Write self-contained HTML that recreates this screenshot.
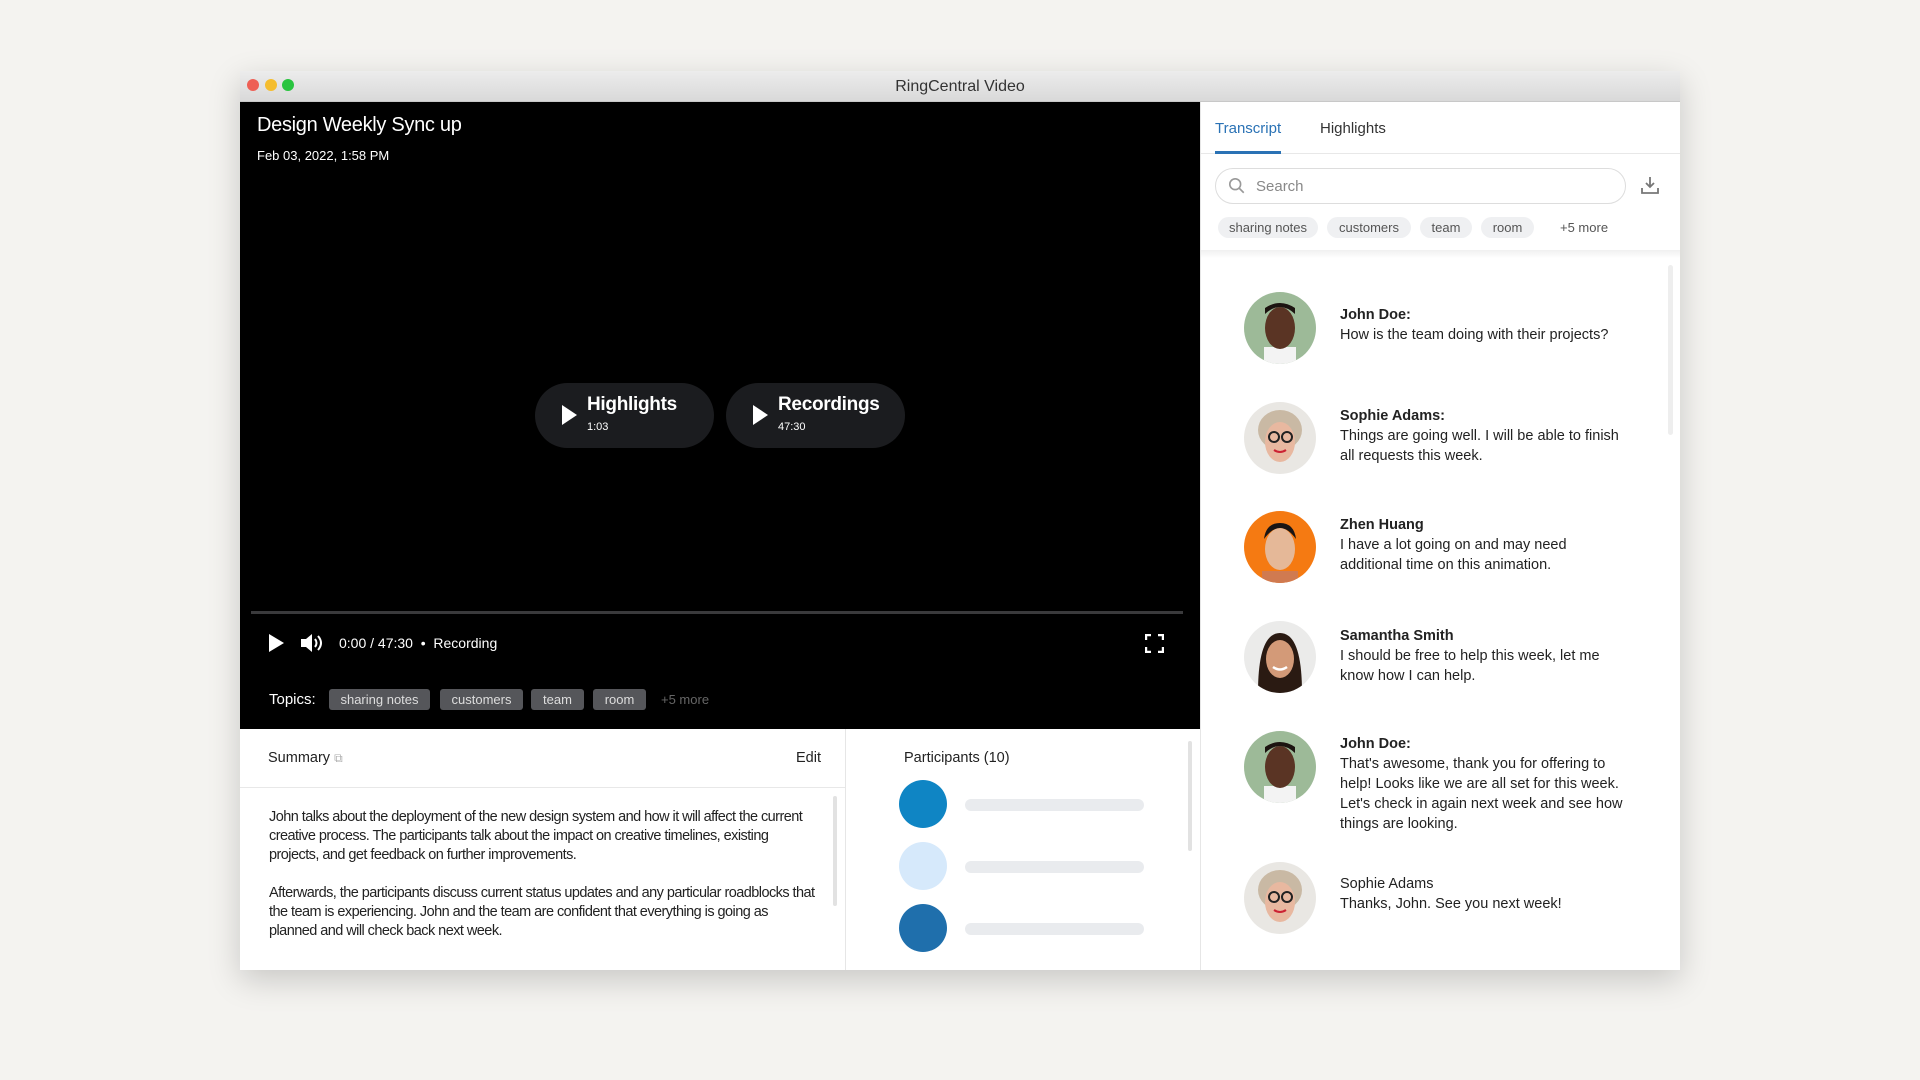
<!DOCTYPE html>
<html><head><meta charset="utf-8"><style>
*{margin:0;padding:0;box-sizing:border-box}
body{width:1920px;height:1080px;background:#f4f3f0;font-family:"Liberation Sans",sans-serif;position:relative;overflow:hidden}
.a{position:absolute}
.win{left:240px;top:71px;width:1440px;height:899px;background:#fff;box-shadow:0 10px 30px rgba(0,0,0,.18)}
.tb{left:240px;top:71px;width:1440px;height:31px;background:linear-gradient(#ececec,#d9d9d9);border-bottom:1px solid #c8c8c8;text-align:center;font-size:16px;line-height:31px;color:#333}
.dot{width:12px;height:12px;border-radius:50%;top:79px}
.vid{left:240px;top:102px;width:960px;height:627px;background:#000}
.pill{top:383px;height:65px;width:179px;border-radius:33px;background:#1b1c1f;color:#fff}
.pill b{position:absolute;left:52px;top:11px;font-size:19px;letter-spacing:-.3px}
.pill span{position:absolute;left:52px;top:38px;font-size:11px}
.tri{position:absolute;left:27px;top:22px;width:0;height:0;border-left:15px solid #fff;border-top:10px solid transparent;border-bottom:10px solid transparent}
.vc{background:#55565a;color:#ddd;font-size:13px;height:21px;line-height:21px;border-radius:3px;text-align:center;top:689px}
.rc{background:#eff0f2;color:#555;font-size:13px;height:21px;line-height:21px;border-radius:11px;text-align:center;top:217px}
.tx{font-size:14.5px;line-height:20px;color:#222;left:1340px;width:286px}
.tx b{display:block}
.sm{font-size:14.5px;line-height:19px;color:#222;left:269px;width:548px;letter-spacing:-.55px}
.bar{left:965px;width:179px;height:12px;border-radius:6px;background:#e9ebee}
.pc{left:899px;width:48px;height:48px;border-radius:50%}
</style></head><body>
<div class="a win"></div>
<div class="a tb">RingCentral Video</div>
<div class="a dot" style="left:247px;background:#ee5f55"></div>
<div class="a dot" style="left:265px;background:#f5bd2e"></div>
<div class="a dot" style="left:282px;background:#29c43f"></div>
<div class="a vid"></div>
<div class="a" style="left:257px;top:114px;color:#fff;font-size:20px;letter-spacing:-.3px">Design Weekly Sync up</div>
<div class="a" style="left:257px;top:148px;color:#fff;font-size:13px">Feb 03, 2022, 1:58 PM</div>
<div class="a pill" style="left:535px"><i class="tri"></i><b>Highlights</b><span>1:03</span></div>
<div class="a pill" style="left:726px"><i class="tri"></i><b>Recordings</b><span>47:30</span></div>
<div class="a" style="left:251px;top:611px;width:932px;height:3px;background:#3a3a3c"></div>
<div class="a" style="left:269px;top:634px;width:0;height:0;border-left:15px solid #fff;border-top:9px solid transparent;border-bottom:9px solid transparent"></div>
<svg class="a" style="left:300px;top:632px" width="24" height="22" viewBox="0 0 24 22"><path d="M1 7h5l6-5v18l-6-5H1z" fill="#fff"/><path d="M15 7q3 4 0 8M18 4q6 7 0 14" stroke="#fff" stroke-width="2" fill="none"/></svg>
<div class="a" style="left:339px;top:635px;color:#fff;font-size:14px">0:00 / 47:30 &nbsp;•&nbsp; Recording</div>
<svg class="a" style="left:1145px;top:634px" width="19" height="19" viewBox="0 0 19 19" fill="none" stroke="#fff" stroke-width="2.4"><path d="M1 6V1h5M13 1h5v5M18 13v5h-5M6 18H1v-5"/></svg>
<div class="a" style="left:269px;top:691px;color:#fff;font-size:15px">Topics:</div>
<div class="a vc" style="left:329px;width:101px">sharing notes</div>
<div class="a vc" style="left:440px;width:83px">customers</div>
<div class="a vc" style="left:531px;width:53px">team</div>
<div class="a vc" style="left:593px;width:53px">room</div>
<div class="a" style="left:661px;top:692px;color:#666;font-size:13px">+5 more</div>
<div class="a" style="left:845px;top:729px;width:1px;height:241px;background:#e6e6e6"></div>
<div class="a" style="left:1200px;top:102px;width:1px;height:868px;background:#e6e6e6"></div>
<div class="a" style="left:268px;top:750px;font-size:14.5px;color:#222">Summary <span style="color:#aaa;font-size:12px">⧉</span></div>
<div class="a" style="left:796px;top:750px;font-size:14.5px;color:#222">Edit</div>
<div class="a" style="left:240px;top:787px;width:605px;height:1px;background:#e8e8e8"></div>
<div class="a" style="left:833px;top:796px;width:4px;height:110px;border-radius:2px;background:#e2e2e2"></div>
<div class="a sm" style="top:808px">John talks about the deployment of the new design system and how it will affect the current creative process. The participants talk about the impact on creative timelines, existing projects, and get feedback on further improvements.</div>
<div class="a sm" style="top:884px">Afterwards, the participants discuss current status updates and any particular roadblocks that the team is experiencing. John and the team are confident that everything is going as planned and will check back next week.</div>
<div class="a" style="left:904px;top:750px;font-size:14.5px;color:#222">Participants (10)</div>
<div class="a" style="left:1188px;top:741px;width:4px;height:110px;border-radius:2px;background:#e2e2e2"></div>
<div class="a pc" style="top:780px;background:#0f85c4"></div>
<div class="a pc" style="top:842px;background:#d6e9fb"></div>
<div class="a pc" style="top:904px;background:#1f6fac"></div>
<div class="a bar" style="top:799px"></div>
<div class="a bar" style="top:861px"></div>
<div class="a bar" style="top:923px"></div>
<div class="a" style="left:1215px;top:120px;font-size:15px;color:#2a72b5">Transcript</div>
<div class="a" style="left:1320px;top:120px;font-size:15px;color:#333">Highlights</div>
<div class="a" style="left:1201px;top:153px;width:479px;height:1px;background:#e8e8e8"></div>
<div class="a" style="left:1215px;top:151px;width:66px;height:3px;background:#2a72b5"></div>
<div class="a" style="left:1215px;top:168px;width:411px;height:36px;border:1px solid #ddd;border-radius:18px"></div>
<svg class="a" style="left:1228px;top:177px" width="18" height="18" viewBox="0 0 20 20" fill="none" stroke="#999" stroke-width="1.8"><circle cx="8" cy="8" r="6"/><path d="M12.5 12.5l5 5"/></svg>
<div class="a" style="left:1256px;top:178px;font-size:15px;color:#888">Search</div>
<svg class="a" style="left:1641px;top:176px" width="18" height="18" viewBox="0 0 18 18" fill="none" stroke="#777" stroke-width="1.8"><path d="M9 1v10M5 7l4 4 4-4M1 12v5h16v-5"/></svg>
<div class="a rc" style="left:1218px;width:100px">sharing notes</div>
<div class="a rc" style="left:1327px;width:84px">customers</div>
<div class="a rc" style="left:1420px;width:52px">team</div>
<div class="a rc" style="left:1481px;width:53px">room</div>
<div class="a" style="left:1560px;top:220px;font-size:13px;color:#555">+5 more</div>
<div class="a" style="left:1201px;top:250px;width:479px;height:8px;background:linear-gradient(rgba(0,0,0,.06),rgba(0,0,0,0))"></div>
<div class="a" style="left:1668px;top:265px;width:5px;height:170px;border-radius:3px;background:#eee"></div>

<svg class="a" style="left:1244px;top:292px" width="72" height="72" viewBox="0 0 72 72"><clipPath id="c1"><circle cx="36" cy="36" r="36"/></clipPath><g clip-path="url(#c1)"><rect width="72" height="72" fill="#9dba98"/><rect x="20" y="55" width="32" height="20" fill="#f3f3f3"/><ellipse cx="36" cy="36" rx="15" ry="21" fill="#5a3424"/><path d="M21 22q15-14 30 0v-6q-15-10-30 0z" fill="#1c1410"/></g></svg>
<svg class="a" style="left:1244px;top:402px" width="72" height="72" viewBox="0 0 72 72"><clipPath id="c2"><circle cx="36" cy="36" r="36"/></clipPath><g clip-path="url(#c2)"><rect width="72" height="72" fill="#e9e7e3"/><ellipse cx="36" cy="28" rx="22" ry="20" fill="#c9b9a4"/><ellipse cx="36" cy="40" rx="15" ry="20" fill="#e8b8a0"/><circle cx="30" cy="35" r="5" fill="none" stroke="#222" stroke-width="2"/><circle cx="43" cy="35" r="5" fill="none" stroke="#222" stroke-width="2"/><path d="M30 48q6 4 12 0" stroke="#c23" stroke-width="2" fill="none"/></g></svg>
<svg class="a" style="left:1244px;top:511px" width="72" height="72" viewBox="0 0 72 72"><clipPath id="c3"><circle cx="36" cy="36" r="36"/></clipPath><g clip-path="url(#c3)"><rect width="72" height="72" fill="#f57a12"/><rect x="18" y="60" width="36" height="14" fill="#d07a50"/><ellipse cx="36" cy="38" rx="15" ry="21" fill="#e5b898"/><path d="M20 28q16-22 32 0q-2-16-16-16t-16 16z" fill="#1a1514"/></g></svg>
<svg class="a" style="left:1244px;top:621px" width="72" height="72" viewBox="0 0 72 72"><clipPath id="c4"><circle cx="36" cy="36" r="36"/></clipPath><g clip-path="url(#c4)"><rect width="72" height="72" fill="#ebebea"/><path d="M14 72q0-60 22-60t22 60z" fill="#2a1a12"/><ellipse cx="36" cy="38" rx="14" ry="19" fill="#d39a78"/><path d="M29 46q7 5 14 0" stroke="#fff" stroke-width="2.5" fill="none"/></g></svg>
<svg class="a" style="left:1244px;top:731px" width="72" height="72" viewBox="0 0 72 72"><clipPath id="c5"><circle cx="36" cy="36" r="36"/></clipPath><g clip-path="url(#c5)"><rect width="72" height="72" fill="#9dba98"/><rect x="20" y="55" width="32" height="20" fill="#f3f3f3"/><ellipse cx="36" cy="36" rx="15" ry="21" fill="#5a3424"/><path d="M21 22q15-14 30 0v-6q-15-10-30 0z" fill="#1c1410"/></g></svg>
<svg class="a" style="left:1244px;top:862px" width="72" height="72" viewBox="0 0 72 72"><clipPath id="c6"><circle cx="36" cy="36" r="36"/></clipPath><g clip-path="url(#c6)"><rect width="72" height="72" fill="#e9e7e3"/><ellipse cx="36" cy="28" rx="22" ry="20" fill="#c9b9a4"/><ellipse cx="36" cy="40" rx="15" ry="20" fill="#e8b8a0"/><circle cx="30" cy="35" r="5" fill="none" stroke="#222" stroke-width="2"/><circle cx="43" cy="35" r="5" fill="none" stroke="#222" stroke-width="2"/><path d="M30 48q6 4 12 0" stroke="#c23" stroke-width="2" fill="none"/></g></svg>

<div class="a tx" style="top:305px"><b>John Doe:</b>How is the team doing with their projects?</div>
<div class="a tx" style="top:406px"><b>Sophie Adams:</b>Things are going well. I will be able to finish all requests this week.</div>
<div class="a tx" style="top:515px"><b>Zhen Huang</b>I have a lot going on and may need additional time on this animation.</div>
<div class="a tx" style="top:626px"><b>Samantha Smith</b>I should be free to help this week, let me know how I can help.</div>
<div class="a tx" style="top:734px"><b>John Doe:</b>That's awesome, thank you for offering to help! Looks like we are all set for this week. Let's check in again next week and see how things are looking.</div>
<div class="a tx" style="top:874px">Sophie Adams<br>Thanks, John. See you next week!</div>
</body></html>
